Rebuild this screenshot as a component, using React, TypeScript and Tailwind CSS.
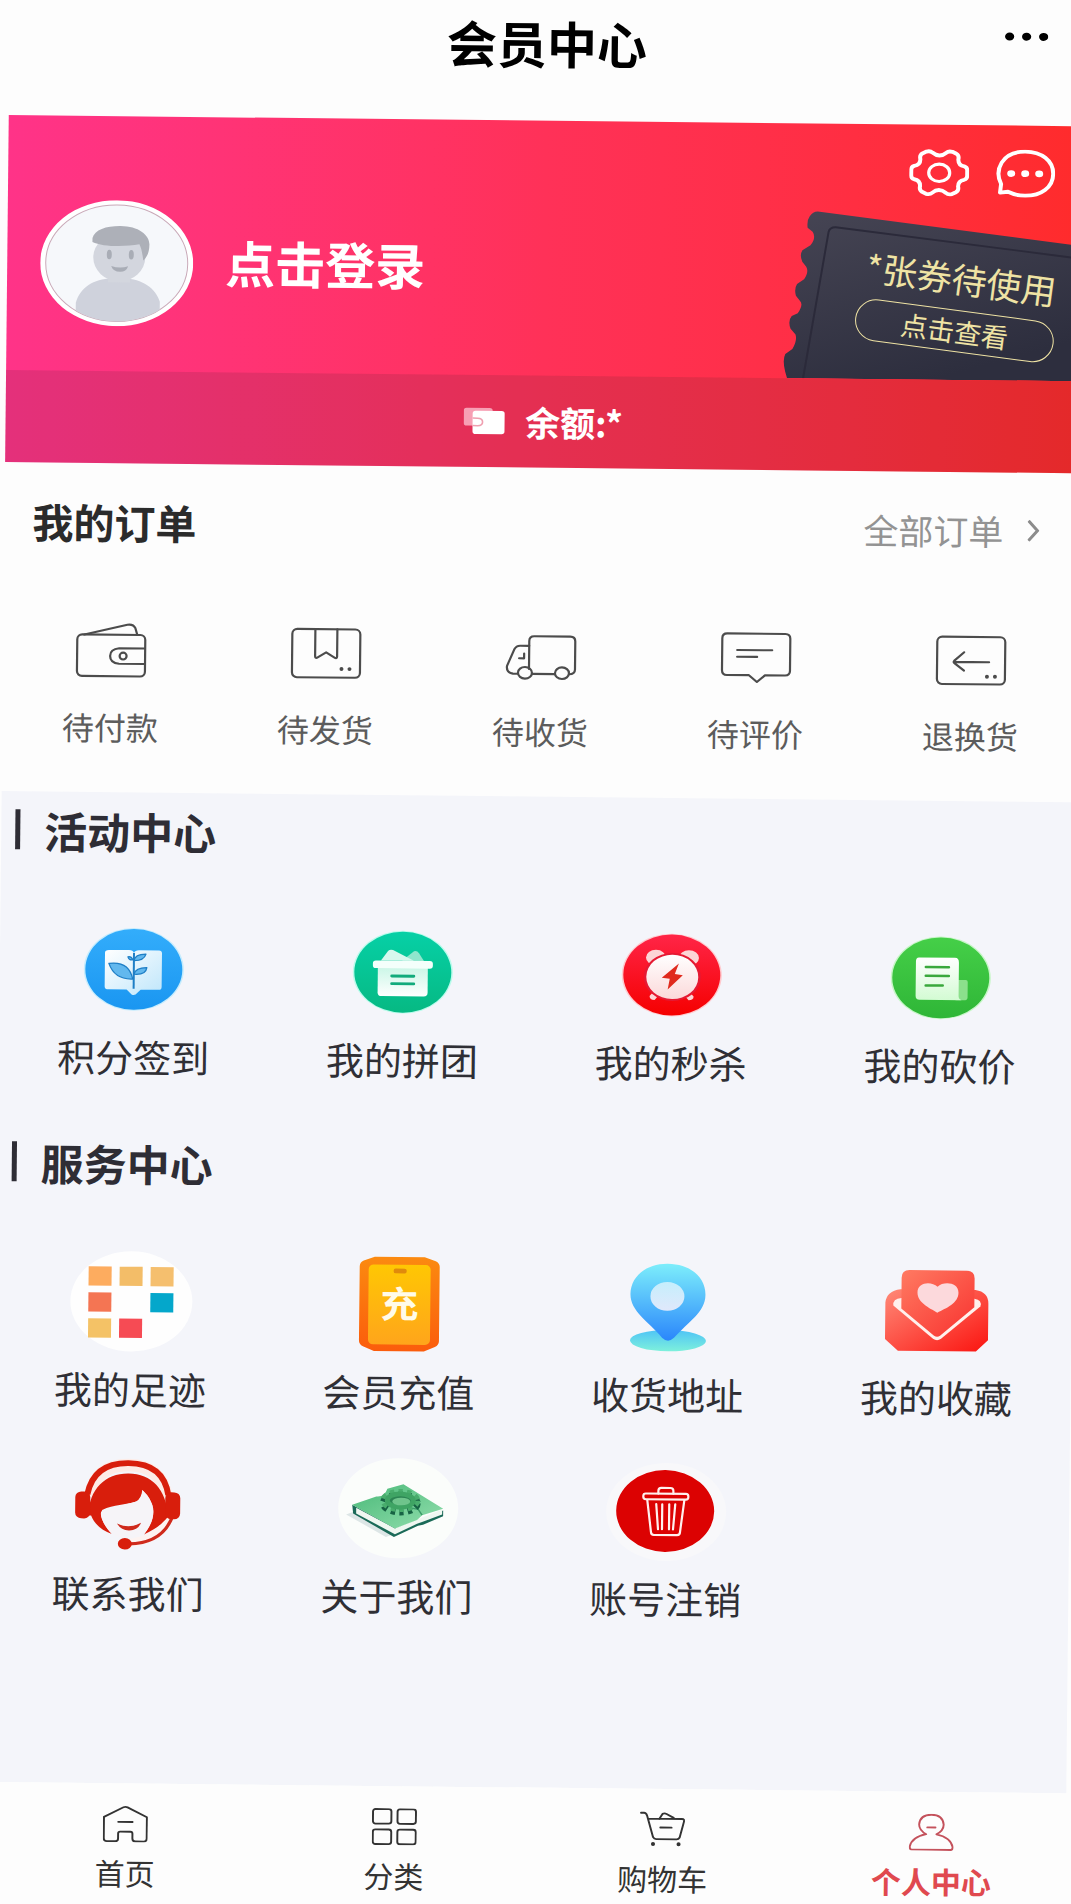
import React from "react";

type Item = { label: string; icon: React.ReactNode };

/* ---------- banner drawings ---------- */

const Avatar = () => (
  <svg width="153" height="126" viewBox="0 0 153 132" preserveAspectRatio="none" aria-hidden="true">
    <defs>
      <clipPath id="face">
        <ellipse cx="76.5" cy="66" rx="71" ry="61" />
      </clipPath>
    </defs>
    <ellipse cx="76.5" cy="66" rx="76.5" ry="66" fill="#fff" />
    <ellipse cx="76.5" cy="66" rx="71" ry="61" fill="#f6f8fb" stroke="#c9a9b8" strokeWidth="1" />
    <g clipPath="url(#face)">
      <path d="M36 132V108C40 92 54 82 72 82H84C102 82 116 92 120 106V132Z" fill="#cfd2dc" />
      <ellipse cx="79" cy="60" rx="26" ry="25" fill="#d3d6de" />
      <rect x="68" y="74" width="22" height="12" fill="#d3d6de" />
    </g>
    <path d="M52 40C54 31 66 27 80 27C98 27 109 36 109 46C109 54 107 59 103 63C102 55 101 50 99 46C84 49 62 49 52 44Z" fill="#adb0b8" />
    <ellipse cx="69" cy="57" rx="2.5" ry="5" fill="#a9adb6" />
    <ellipse cx="91" cy="57" rx="2.5" ry="5" fill="#a9adb6" />
    <path d="M71 69Q80 72 88 69Q86 75 80 75Q73 75 71 69Z" fill="#a9adb6" />
  </svg>
);

const Gear = () => (
  <svg width="60" height="48" viewBox="0 0 60 50" preserveAspectRatio="none" fill="none" stroke="#fff" strokeWidth="4" strokeLinejoin="round" aria-hidden="true">
    <path d="M17 3Q21 2 23 4Q30 10 37 4Q39 2 43 3L47 5Q50 7 49 11Q49 17 55 18Q58 19 58 22V28Q58 31 55 32Q49 33 49 39Q50 43 47 45L43 47Q39 48 37 46Q30 40 23 46Q21 48 17 47L13 45Q10 43 11 39Q11 33 5 32Q2 31 2 28V22Q2 19 5 18Q11 17 11 11Q10 7 13 5Z" />
    <ellipse cx="30" cy="25" rx="10.5" ry="9" strokeWidth="3.2" />
  </svg>
);

const Chat = () => (
  <svg width="60" height="48" viewBox="0 0 60 50" preserveAspectRatio="none" fill="none" aria-hidden="true">
    <path d="M6 36C-1 22 6 2 30 2C46 2 58 11 58 25C58 39 46 48 30 48C23 48 17 46 13 44L5 45Z" stroke="#fff" strokeWidth="4" strokeLinejoin="round" />
    <g fill="#fff">
      <ellipse cx="16" cy="25" rx="4" ry="3.5" />
      <ellipse cx="30" cy="25" rx="4" ry="3.5" />
      <ellipse cx="44" cy="25" rx="4" ry="3.5" />
    </g>
  </svg>
);

const CouponShape = () => (
  <svg className="absolute inset-0" width="304" height="170" viewBox="0 0 304 175" preserveAspectRatio="none" aria-hidden="true">
    <defs>
      <linearGradient id="coupon" x1="0" y1="0" x2="0.5" y2="1">
        <stop offset="0" stopColor="#464554" />
        <stop offset="1" stopColor="#2d2e3e" />
      </linearGradient>
    </defs>
    <path
      d="M39 3L304 36V175H10L8 168Q5 156 8 150L15 145Q20 136 18 130L13 124Q10 116 14 111L20 108Q26 99 22 95L18 90Q16 83 19 78L26 73Q31 65 28 60L24 55Q21 48 24 43L32 38Q38 30 34 24L29 20Q28 12 31 8Q34 3 39 3Z"
      fill="url(#coupon)"
    />
    <path d="M26 175L50 24Q51 19 57 19L304 49" fill="none" stroke="#2b2a3a" strokeWidth="2" />
  </svg>
);

const BalanceIcon = () => (
  <svg width="42" height="28" viewBox="0 0 42 30" preserveAspectRatio="none" aria-hidden="true">
    <path d="M3 1H26Q29 1 29 4V20H3Q0 20 0 17V4Q0 1 3 1Z" fill="#f79fb4" />
    <rect x="9" y="4" width="32" height="25" rx="3" fill="#fff" />
    <path d="M9 12H14Q19 12 19 16Q19 20 14 20H9" fill="none" stroke="#ef9fb0" strokeWidth="1.6" />
  </svg>
);

/* ---------- order icons ---------- */

const OrderSvg = ({ children }: { children: React.ReactNode }) => (
  <svg width="74" height="56" viewBox="-2 -1 74 58" preserveAspectRatio="none" fill="none" stroke="#4c4c4c" strokeWidth="2.2" strokeLinecap="round" strokeLinejoin="round" aria-hidden="true">
    {children}
  </svg>
);

const orders: Item[] = [
  {
    label: "待付款",
    icon: (
      <OrderSvg>
        <rect x="1" y="12" width="68" height="43" rx="5" />
        <path d="M8 12L51 1.500Q57 0.500 59 5L61 12" />
        <path d="M68 26H43Q34 27 34 34Q34 41 43 42H68" />
        <circle cx="47" cy="34" r="3.500" />
      </OrderSvg>
    ),
  },
  {
    label: "待发货",
    icon: (
      <OrderSvg>
        <rect x="1" y="4" width="68" height="50" rx="5" />
        <path d="M24 4V32Q24 35 27 33L35 28L43 33Q46 35 46 32V4" />
        <g fill="#4c4c4c" stroke="none">
          <circle cx="50.500" cy="45" r="2" />
          <circle cx="58.500" cy="45" r="2" />
        </g>
      </OrderSvg>
    ),
  },
  {
    label: "待收货",
    icon: (
      <OrderSvg>
        <path d="M12 48H7Q0 47 1 40L8 23Q10 19 14 19H23" />
        <path d="M26 48H49M63 48Q69 48 69 43V14Q69 9 64 9H28Q23 9 23 14V43" />
        <ellipse cx="19" cy="47" rx="7" ry="6" />
        <ellipse cx="56" cy="47" rx="7" ry="6" />
        <path d="M18 27V32H13" />
      </OrderSvg>
    ),
  },
  {
    label: "待评价",
    icon: (
      <OrderSvg>
        <path d="M6 4H64Q69 4 69 9V42Q69 47 64 47H44L36 54L28 47H6Q1 47 1 42V9Q1 4 6 4Z" />
        <path d="M16 21H51M16 28H36" />
      </OrderSvg>
    ),
  },
  {
    label: "退换货",
    icon: (
      <OrderSvg>
        <rect x="1" y="5" width="68" height="49" rx="5" />
        <path d="M53 31H18M28 21L18 30Q17 31 18 32L28 40" />
        <g fill="#4c4c4c" stroke="none">
          <circle cx="51" cy="46" r="2" />
          <circle cx="59" cy="46" r="2" />
        </g>
      </OrderSvg>
    ),
  },
];

/* ---------- activity and service icons ---------- */

const Tile = ({ children }: { children: React.ReactNode }) => (
  <svg width="126" height="102" viewBox="0 0 126 106" preserveAspectRatio="none" aria-hidden="true">
    {children}
  </svg>
);

const Grad = ({ id, from, to, diag = false }: { id: string; from: string; to: string; diag?: boolean }) => (
  <linearGradient id={id} x1="0" y1="0" x2={diag ? "1" : "0"} y2="1">
    <stop offset="0" stopColor={from} />
    <stop offset="1" stopColor={to} />
  </linearGradient>
);

const activities: Item[] = [
  {
    label: "积分签到",
    icon: (
      <Tile>
        <defs>
          <Grad id="sky" from="#33adfb" to="#1a96f1" />
          <Grad id="page" from="#ffffff" to="#bfe6fb" diag />
        </defs>
        <ellipse cx="63" cy="53" rx="50" ry="43" fill="#c5ecfd" />
        <ellipse cx="63" cy="53" rx="48.500" ry="42" fill="url(#sky)" />
        <path d="M38 33H58Q62 33 63 36Q64 33 68 33H88Q91 33 91 36V71Q91 74 88 74H70L65 79Q63 80 61 79L56 74H38Q34 74 34 71V36Q34 33 38 33Z" fill="url(#page)" />
        <g fill="#62b8ee" stroke="#1f7fc6" strokeWidth="1.300" strokeLinejoin="round">
          <path d="M38 47Q58 44 62 63Q44 64 38 47Z" />
          <path d="M63 58Q65 51 76 51Q75 59 63 58Z" />
          <path d="M63 44Q64 37 75 37Q73 44 63 44Z" />
          <path d="M57 40Q60 39 62 43Q58 44 57 40Z" />
        </g>
        <path d="M63 36V73" stroke="#1f7fc6" strokeWidth="2" fill="none" />
      </Tile>
    ),
  },
  {
    label: "我的拼团",
    icon: (
      <Tile>
        <defs>
          <Grad id="mint" from="#06d0a6" to="#06b983" />
          <Grad id="box" from="#c9f6e6" to="#ffffff" />
        </defs>
        <ellipse cx="63" cy="53" rx="50" ry="43" fill="#b9fbeb" />
        <ellipse cx="63" cy="53" rx="48.500" ry="42" fill="url(#mint)" />
        <path d="M62 41L74 31Q77 30 79 33L84 41Z" fill="#8fe6cd" />
        <path d="M41 41L48 31Q50 29 53 30L74 41Z" fill="#d7f8ee" />
        <path d="M38 47H88V74Q88 78 84 78H42Q38 78 38 74Z" fill="url(#box)" />
        <rect x="33" y="41" width="60" height="8" rx="3" fill="#f4fffb" />
        <path d="M52 57H74M52 65H74" stroke="#12ab7c" strokeWidth="3" strokeLinecap="round" />
      </Tile>
    ),
  },
  {
    label: "我的秒杀",
    icon: (
      <Tile>
        <defs>
          <Grad id="ruby" from="#ff2547" to="#f50000" />
          <Grad id="dial" from="#ffffff" to="#fbd9da" />
        </defs>
        <ellipse cx="63" cy="53" rx="50" ry="43" fill="#ffc9cd" />
        <ellipse cx="63" cy="53" rx="48.500" ry="42" fill="url(#ruby)" />
        <g fill="#fcd5d6">
          <ellipse cx="47" cy="35" rx="10" ry="8" />
          <ellipse cx="80" cy="35" rx="10" ry="8" />
          <path d="M41 75L47 68L51 73L46 79Q41 79 41 75Z" />
          <path d="M85 75L79 68L75 73L80 79Q85 79 85 75Z" />
        </g>
        <ellipse cx="63.500" cy="55" rx="28.500" ry="25" fill="#e51a33" />
        <ellipse cx="63.500" cy="55" rx="26" ry="23" fill="url(#dial)" />
        <path d="M70 41L53 56L61 57L59 68L74 53L66 52Z" fill="#e02a1d" />
      </Tile>
    ),
  },
  {
    label: "我的砍价",
    icon: (
      <Tile>
        <defs>
          <Grad id="leaf" from="#45cf48" to="#2fb637" />
          <Grad id="sheet" from="#ffffff" to="#d3fbd3" />
        </defs>
        <ellipse cx="63" cy="53" rx="50" ry="43" fill="#c6f6c6" />
        <ellipse cx="63" cy="53" rx="48.500" ry="42" fill="url(#leaf)" />
        <path d="M78 55H88Q90 55 90 57V73Q90 76 86 76H78Z" fill="#8ce08c" />
        <path d="M41 32H77Q81 32 81 37V72Q81 75 84 76H42Q38 76 38 72V36Q38 32 41 32Z" fill="url(#sheet)" />
        <path d="M48 42H71M48 51H71M48 61H65" stroke="#3aa83c" strokeWidth="2.600" strokeLinecap="round" />
      </Tile>
    ),
  },
];

const services: Item[] = [
  {
    label: "我的足迹",
    icon: (
      <Tile>
        <ellipse cx="64" cy="53" rx="61" ry="52" fill="#fefefe" />
        <rect x="21" y="17" width="23" height="20" fill="#fdac5f" />
        <rect x="52" y="17" width="23" height="20" fill="#f3bd68" />
        <rect x="83" y="17" width="23" height="20" fill="#f5bf6e" />
        <rect x="21" y="44" width="23" height="20" fill="#f47553" />
        <rect x="83" y="44" width="23" height="20" fill="#04a7cb" />
        <rect x="21" y="71" width="23" height="20" fill="#f4c266" />
        <rect x="52" y="71" width="23" height="20" fill="#f64b54" />
      </Tile>
    ),
  },
  {
    label: "会员充值",
    icon: (
      <Tile>
        <defs>
          <Grad id="frame" from="#fb8a10" to="#fb5c0c" />
          <Grad id="gold" from="#ffc703" to="#ffa51b" />
        </defs>
        <path d="M38 4H88L99 8Q103 10 103 14V91Q103 95 99 97L88 102H38L27 97Q23 95 23 91V14Q23 10 27 8Z" fill="url(#frame)" />
        <rect x="32" y="12" width="62" height="83" rx="5" fill="url(#gold)" />
        <rect x="57" y="16" width="13" height="5" rx="2" fill="#e08a0c" />
        <text x="63" y="67" textAnchor="middle" fontSize="38" fontWeight="700" fill="#fffbe8">充</text>
      </Tile>
    ),
  },
  {
    label: "收货地址",
    icon: (
      <Tile>
        <defs>
          <Grad id="pin" from="#7deefb" to="#2a86fb" />
          <Grad id="ground" from="#4fc4f6" to="#7df0dc" />
          <Grad id="hole" from="#c5eefc" to="#e0e8fb" />
        </defs>
        <g transform="translate(-3 -1)">
          <ellipse cx="66" cy="89" rx="38" ry="11" fill="url(#ground)" />
          <path d="M65 9C88 9 103 23 103 41C103 59 86 69 72 86Q66 92 60 86C46 69 28 59 28 41C28 23 43 9 65 9Z" fill="url(#pin)" />
          <ellipse cx="65" cy="43" rx="17" ry="15" fill="url(#hole)" />
        </g>
      </Tile>
    ),
  },
  {
    label: "我的收藏",
    icon: (
      <Tile>
        <defs>
          <Grad id="letter" from="#ff7a62" to="#f8322f" diag />
          <Grad id="env" from="#ff8a78" to="#fb1410" diag />
        </defs>
        <g transform="translate(-6 0)">
          <path d="M32 32H107Q120 34 120 46V84L108 96H30L17 84V46Q18 34 32 32Z" fill="url(#env)" />
          <path d="M33 41Q24 42 25 49L65 83Q69 86 73 83L112 49Q114 42 106 41Z" fill="#fff0ec" />
          <path d="M41 12H98Q106 12 106 20V50L72 80Q69 82 66 80L33 52V20Q33 12 41 12Z" fill="url(#letter)" />
          <path d="M69 56C61 51 49 46 49 35C49 24 63 23 69 29C75 23 90 24 90 35C90 46 78 51 69 56Z" fill="#fcd9dc" />
        </g>
      </Tile>
    ),
  },
  {
    label: "联系我们",
    icon: (
      <Tile>
        <path d="M25 44Q30 11 63 11Q96 11 101 44" fill="none" stroke="#fdebe6" strokeWidth="13" />
        <path d="M22 42Q28 9 63 9Q98 9 103 42" fill="none" stroke="#d81e0c" strokeWidth="6" />
        <path d="M105 63Q96 88 64 92" fill="none" stroke="#fdf3f1" strokeWidth="9" />
        <path d="M108 62Q99 92 64 93" fill="none" stroke="#cf2a1c" strokeWidth="3.200" />
        <path
          d="M23 64C24 36 40 20 63 20C86 20 101 36 103 64C97 72 90 78 79 83C87 72 89 64 88 56C87 49 82 43 77 37C77 43 75 47 71 49C60 53 49 52 37 58C34 65 40 76 47 83C36 79 29 72 26 64Z"
          fill="#d81e0c"
        />
        <path d="M36 60Q60 52 71 49Q76 46 77 37Q87 46 88 58Q89 70 79 83Q63 92 47 83Q34 68 36 60Z" fill="#f6f4f8" />
        <path d="M52 72Q64 78 76 71Q73 79 64 79Q56 79 52 72Z" fill="#cf2a1c" />
        <rect x="10" y="39" width="15" height="28" rx="6" fill="#d81e0c" />
        <rect x="100" y="39" width="15" height="28" rx="6" fill="#d81e0c" />
        <ellipse cx="60" cy="93" rx="7" ry="6" fill="#d81e0c" />
      </Tile>
    ),
  },
  {
    label: "关于我们",
    icon: (
      <Tile>
        <defs>
          <Grad id="cover" from="#48b877" to="#93dfae" diag />
        </defs>
        <ellipse cx="64" cy="53" rx="60" ry="52" fill="#fbfdfb" />
        <path d="M12 60L22 56L60 80L52 83Z" fill="#dde6e6" />
        <path d="M18 50L19 59L60 83L84 71L89 70L109 61V55L62 74Z" fill="#1b6a58" />
        <path d="M22 53L61 74L82 65L108 54V59L88 67L83 69L61 80L22 59Z" fill="#f0f7f1" />
        <path d="M18 50L42 41Q50 42 53 33L69 28L109 53L88 60L83 65L61 74Z" fill="url(#cover)" />
        <path d="M88 60L84 54L68 51" fill="none" stroke="#3b9c69" strokeWidth="1.500" />
        <ellipse cx="66" cy="48" rx="16" ry="8" fill="none" stroke="#176344" strokeWidth="9" strokeDasharray="4 4" />
        <ellipse cx="66" cy="45" rx="16" ry="8" fill="none" stroke="#49ad6d" strokeWidth="8" strokeDasharray="4 4" />
        <ellipse cx="66" cy="45" rx="13" ry="7" fill="#2c8453" stroke="#3fa464" strokeWidth="5" />
        <ellipse cx="67" cy="46" rx="9" ry="4" fill="#6fc48c" />
      </Tile>
    ),
  },
  {
    label: "账号注销",
    icon: (
      <Tile>
        <ellipse cx="63" cy="54" rx="60" ry="51" fill="#f8f8fa" />
        <g transform="translate(-2 -1)">
          <ellipse cx="64" cy="54" rx="49" ry="42.500" fill="#dc0202" />
          <g fill="none" stroke="#fff0ee" strokeWidth="2.200" strokeLinejoin="round" strokeLinecap="round">
            <rect x="42" y="36" width="45" height="6" rx="2.500" />
            <path d="M57 36V33Q57 30 60 30H69Q72 30 72 33V36" />
            <path d="M46 43L50 76Q50 79 53 79H76Q79 79 79 76L83 43" />
            <path d="M55 47L57 73M61 47V73M68 47V73M74 47L72 73" />
          </g>
        </g>
      </Tile>
    ),
  },
];

/* ---------- bottom navigation ---------- */

const NavSvg = ({ children, color = "#333" }: { children: React.ReactNode; color?: string }) => (
  <svg width="45" height="37" viewBox="0 0 44 38" preserveAspectRatio="none" fill="none" stroke={color} strokeWidth="1.900" strokeLinecap="round" strokeLinejoin="round" aria-hidden="true">
    {children}
  </svg>
);

const tabs: Item[] = [
  {
    label: "首页",
    icon: (
      <NavSvg>
        <path d="M1 12L20 2Q22 1 24 2L43 12V34Q43 37 40 37H32Q29 37 29 34V29Q29 27 27 27H17Q15 27 15 29V34Q15 37 12 37H4Q1 37 1 34Z" />
        <path d="M15 17H29" />
      </NavSvg>
    ),
  },
  {
    label: "分类",
    icon: (
      <NavSvg>
        <rect x="1" y="1" width="18" height="15" rx="2.500" />
        <rect x="25" y="1" width="18" height="15" rx="2.500" />
        <rect x="1" y="22" width="18" height="15" rx="2.500" />
        <rect x="25" y="22" width="18" height="15" rx="2.500" />
      </NavSvg>
    ),
  },
  {
    label: "购物车",
    icon: (
      <NavSvg>
        <path d="M1 2H4Q6 2 7 5L13 27Q14 29 16 29H36Q38 29 39 27L43 11Q44 8 41 8H8" />
        <path d="M19 8L22 3Q24 2 26 3L33 7M20 17H31" />
        <g fill="#333" stroke="none">
          <circle cx="13" cy="34" r="2" />
          <circle cx="38" cy="34" r="2" />
        </g>
      </NavSvg>
    ),
  },
  {
    label: "个人中心",
    icon: (
      <NavSvg color="#c4525c">
        <path d="M17 21Q10 17 10 11Q11 1 22 1Q33 1 34 11Q34 17 27 21Q41 24 43 34Q43 37 41 37H3Q1 37 1 34Q3 24 17 21Z" />
        <path d="M18 14H26" />
      </NavSvg>
    ),
  },
];

/* ---------- building blocks ---------- */

const SectionTitle = ({ children }: { children: React.ReactNode }) => (
  <h2 className="flex items-center gap-6 pl-3.5 text-[43px] leading-[48px] font-bold text-[#2e2d35]">
    <span className="h-10 w-[5px] bg-[#2e2d35]" />
    {children}
  </h2>
);

const ItemGrid = ({ items }: { items: Item[] }) => (
  <div className="grid grid-cols-4 gap-y-[42px]">
    {items.map((item) => (
      <a key={item.label} href="#" className="flex flex-col items-center gap-3 text-[38px] leading-[48px] text-[#2f2f35]">
        {item.icon}
        {item.label}
      </a>
    ))}
  </div>
);

export default function App() {
  return (
    <div className="min-h-screen overflow-hidden bg-[#fdfdfd] font-['Noto_Sans_CJK_SC','Noto_Sans',sans-serif]">
      <div className="-mr-1 flex min-h-screen origin-left rotate-[0.6deg] flex-col">
        <header className="grid grid-cols-[1fr_auto_1fr] items-start pt-1.5 pb-[49px]">
          <h1 className="col-start-2 text-[50px] leading-[60px] font-bold text-black">会员中心</h1>
          <button aria-label="更多" className="mt-3 mr-9 justify-self-end">
            <svg width="44" height="16" viewBox="0 0 44 16" aria-hidden="true">
              <ellipse cx="5" cy="8" rx="4.600" ry="4" />
              <ellipse cx="22" cy="8" rx="4.600" ry="4" />
              <ellipse cx="39" cy="8" rx="4.600" ry="4" />
            </svg>
          </button>
        </header>

        <section className="bg-linear-to-r from-[#ff3388] via-[#ff3158] to-[#ff2b2b] text-white">
          <div className="flex justify-between">
            <button className="flex items-center gap-8 pt-[84px] pb-[45px] pl-[33px] text-[50px] leading-[60px] font-bold">
              <Avatar />
              <span className="pb-1.5">点击登录</span>
            </button>
            <div className="flex w-[304px] flex-col justify-between">
              <div className="flex justify-end gap-[26px] pt-6 pr-7">
                <button aria-label="设置"><Gear /></button>
                <button aria-label="消息"><Chat /></button>
              </div>
              <div className="relative h-[170px] overflow-hidden">
                <CouponShape />
                <div className="relative mt-12 ml-[80px] flex w-[200px] rotate-7 flex-col items-center gap-3 text-[#efe3a4]">
                  <p className="text-[35px] leading-10 whitespace-nowrap">*张券待使用</p>
                  <button className="w-full rounded-full border-[1.500px] border-[#efe3a4] text-[27px] leading-10">点击查看</button>
                </div>
              </div>
            </div>
          </div>
          <div className="flex items-center justify-center gap-5 bg-[#202020]/12 py-6 text-[35px] leading-[44px] font-bold">
            <BalanceIcon />
            <span>余额:*</span>
          </div>
        </section>

        <section className="pt-8 pb-[46px]">
          <div className="flex items-center justify-between pr-10 pl-7">
            <h2 className="text-[41px] leading-[52px] font-bold text-[#2b2b2b]">我的订单</h2>
            <a href="#" className="flex items-center gap-6 text-[35px] leading-[48px] text-[#939393]">
              全部订单
              <svg width="12" height="22" viewBox="0 0 12 22" fill="none" stroke="#8c8c8c" strokeWidth="3" aria-hidden="true">
                <path d="M1 1L10 11L1 21" />
              </svg>
            </a>
          </div>
          <div className="mt-[75px] grid grid-cols-5">
            {orders.map((item) => (
              <a key={item.label} href="#" className="flex flex-col items-center gap-7 text-[32px] leading-10 text-[#5c5c5c]">
                {item.icon}
                {item.label}
              </a>
            ))}
          </div>
        </section>

        <main className="flex-1 bg-[#f4f5fa] pt-3.5">
          <SectionTitle>活动中心</SectionTitle>
          <div className="mt-16 mb-[58px]">
            <ItemGrid items={activities} />
          </div>
          <SectionTitle>服务中心</SectionTitle>
          <div className="mt-16">
            <ItemGrid items={services} />
          </div>
        </main>

        <nav className="grid grid-cols-4 bg-[#fdfdfd] pt-[22px] pb-[15px]">
          {tabs.map((tab, i) => (
            <a
              key={tab.label}
              href="#"
              aria-current={i === 3 ? "page" : undefined}
              className="flex flex-col items-center gap-3 text-[30px] leading-9 text-[#333] aria-[current=page]:font-bold aria-[current=page]:text-[#e0494f]"
            >
              {tab.icon}
              {tab.label}
            </a>
          ))}
        </nav>
      </div>
    </div>
  );
}
